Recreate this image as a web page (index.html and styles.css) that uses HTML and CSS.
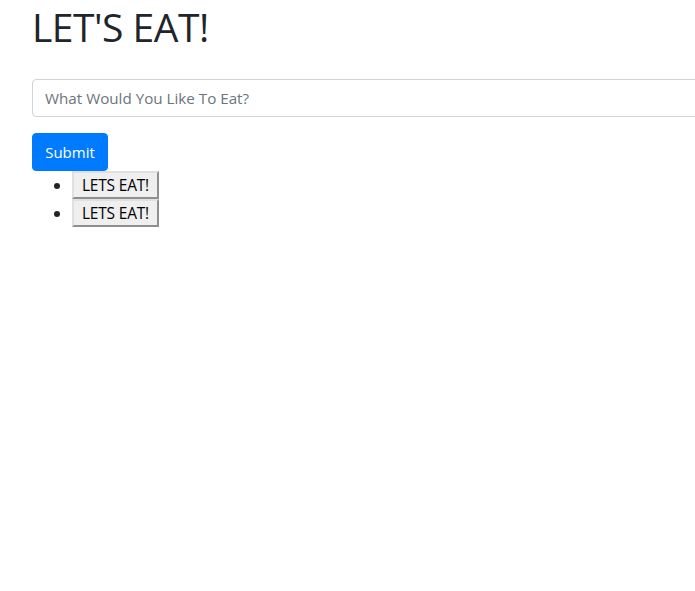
FILE: index.html
```html
<!DOCTYPE html>
<html>
<head>
<meta charset="utf-8">
<link rel="stylesheet" href="styles.css">
</head>
<body>
<div class="page">
  <h1 class="title">LET'S EAT!</h1>
  <form class="form">
    <div class="form-group">
      <input class="form-control" type="text" placeholder="What Would You Like To Eat?">
    </div>
    <button class="btn-primary" type="button">Submit</button>
  </form>
  <ul class="list">
    <li><button class="eat" type="button">LETS EAT!</button></li>
    <li><button class="eat" type="button">LETS EAT!</button></li>
  </ul>
</div>
</body>
</html>
```
FILE: styles.css
```css
html, body {
  margin: 0;
  padding: 0;
  background: #fff;
}
body {
  font-family: "Open Sans", "Noto Sans", sans-serif;
  font-size: 16px;
  line-height: 1.5;
  color: #212529;
  overflow: hidden;
}
.page {
  padding-left: 32px;
}
.title {
  margin: 0 0 28px 0;
  font-size: 39px;
  font-weight: 400;
  line-height: 1.2;
  padding-top: 4px;
  letter-spacing: -0.5px;
}
.form {
  margin: 0;
}
.form-group {
  margin-bottom: 16px;
}
.form-control {
  display: block;
  box-sizing: border-box;
  width: 720px;
  height: 38px;
  padding: 6px 12px;
  font-family: inherit;
  font-size: 15.2px;
  color: #495057;
  background: #fff;
  border: 1px solid #ced4da;
  border-radius: 4px;
}
.form-control::placeholder {
  color: #6c757d;
}
.btn-primary {
  display: block;
  box-sizing: border-box;
  height: 38px;
  width: 76px;
  padding: 0 12px;
  font-family: inherit;
  font-size: 15px;
  color: #fff;
  background: #007bff;
  border: 1px solid #007bff;
  border-radius: 4px;
}
.list {
  margin: 0;
  padding-left: 40px;
  line-height: 28px;
}
.list li {
  height: 28px;
}
.eat {
  box-sizing: border-box;
  height: 28px;
  width: 87px;
  padding: 0 4px;
  font-family: inherit;
  font-size: 15.5px;
  letter-spacing: -0.2px;
  color: #000;
  background: #efefef;
  border: 2px solid #e0e0e0;
  border-right-color: #8f8f8f;
  border-bottom-color: #8f8f8f;
  border-radius: 0;
  vertical-align: top;
}
```
